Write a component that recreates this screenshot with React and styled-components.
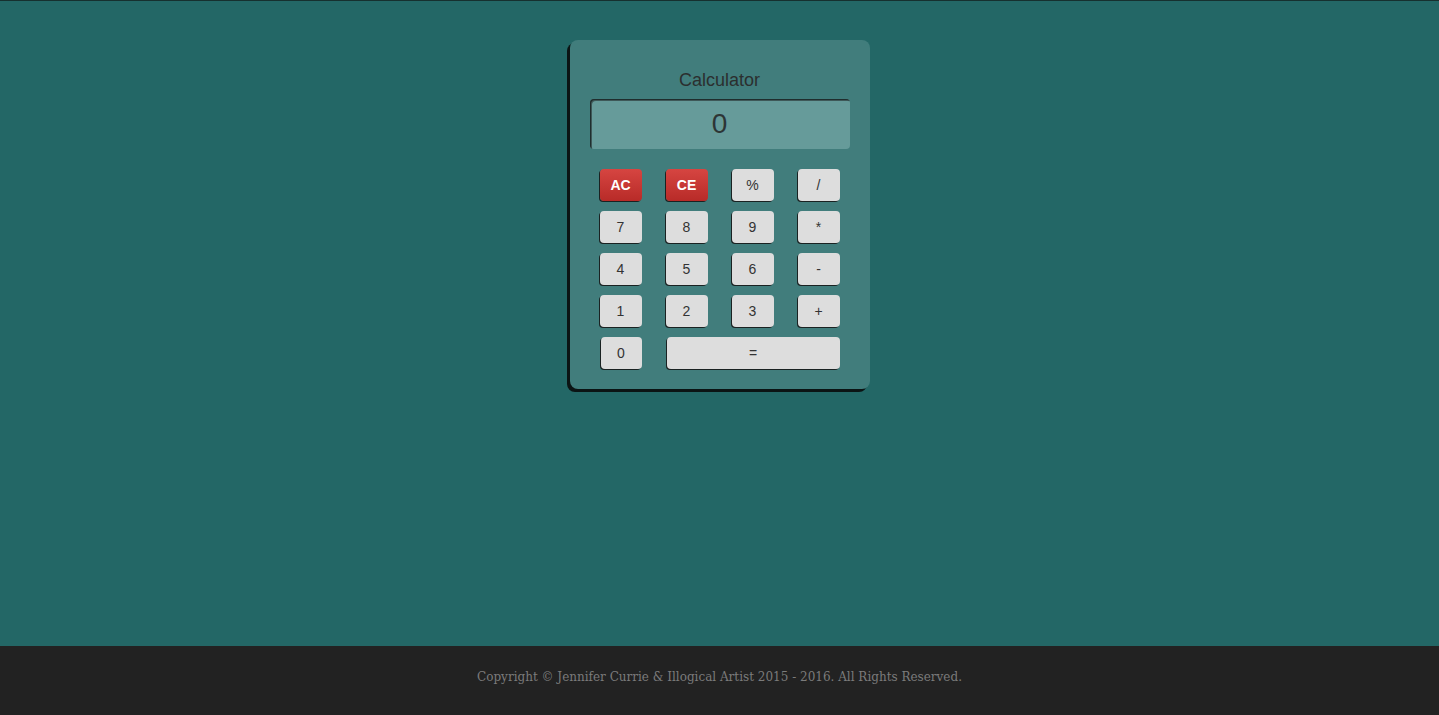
import React from "react";
import styled, { createGlobalStyle } from "styled-components";

const GlobalStyle = createGlobalStyle`
  html, body {
    margin: 0;
    padding: 0;
    height: 100%;
  }
  #root {
    min-height: 100%;
  }
`;

const Page = styled.div`
  display: flex;
  flex-direction: column;
  min-height: 100vh;
  background-color: #236766;
  border-top: 1px solid #16302f;
  box-sizing: border-box;
`;

const Main = styled.main`
  flex: 1;
  display: flex;
  justify-content: center;
  align-items: flex-start;
  padding-top: 39px;
`;

const Card = styled.div`
  width: 300px;
  box-sizing: border-box;
  padding: 20px;
  background-color: #417d7c;
  border-radius: 8px;
  box-shadow: -3px 3px 0 #0b1414;
`;

const Title = styled.h1`
  margin: 10px 0 9px;
  font-family: "Liberation Sans", Arial, sans-serif;
  font-size: 18px;
  line-height: 20px;
  font-weight: normal;
  text-align: center;
  color: #2b2f2f;
`;

const Display = styled.div`
  height: 50px;
  box-sizing: border-box;
  background-color: #669b9a;
  border-radius: 4px;
  box-shadow: inset 1px 1px 0 #1f2d2d, inset 2px 2px 0 #3e5858;
  display: flex;
  align-items: center;
  justify-content: center;
  font-family: "Liberation Sans", Arial, sans-serif;
  font-size: 28px;
  color: #2d3535;
`;

const Keys = styled.div`
  display: grid;
  grid-template-columns: repeat(4, 42px);
  grid-auto-rows: 32px;
  column-gap: 24px;
  row-gap: 10px;
  margin-top: 20px;
  padding-left: 10px;
`;

const Key = styled.button`
  grid-column: ${(props) => (props.$span ? `span ${props.$span}` : "auto")};
  margin-left: ${(props) => (props.$nudge ? "1px" : "0")};
  border: none;
  border-radius: 4px;
  padding: 0;
  font-family: "Liberation Sans", Arial, sans-serif;
  font-size: 14px;
  font-weight: ${(props) => (props.$danger ? "bold" : "normal")};
  color: ${(props) => (props.$danger ? "#ffffff" : "#333333")};
  background: ${(props) =>
    props.$danger
      ? "linear-gradient(to bottom, #d64541, #b82b28)"
      : "#dddddd"};
  box-shadow: -1px 1px 0 #1a2222;
  cursor: pointer;
`;

const Footer = styled.footer`
  height: 69px;
  box-sizing: border-box;
  padding-bottom: 8px;
  background-color: #222222;
  display: flex;
  align-items: center;
  justify-content: center;
  font-family: "DejaVu Serif", Georgia, serif;
  font-size: 12px;
  color: #7b7b7b;
`;

const keys = [
  { label: "AC", danger: true },
  { label: "CE", danger: true },
  { label: "%" },
  { label: "/" },
  { label: "7" },
  { label: "8" },
  { label: "9" },
  { label: "*" },
  { label: "4" },
  { label: "5" },
  { label: "6" },
  { label: "-" },
  { label: "1" },
  { label: "2" },
  { label: "3" },
  { label: "+" },
  { label: "0", nudge: true },
  { label: "=", span: 3, nudge: true },
];

const App = () => {
  return (
    <>
      <GlobalStyle />
      <Page>
        <Main>
          <Card>
            <Title>Calculator</Title>
            <Display>0</Display>
            <Keys>
              {keys.map((k) => (
                <Key
                  key={k.label}
                  $danger={k.danger}
                  $span={k.span}
                  $nudge={k.nudge}
                >
                  {k.label}
                </Key>
              ))}
            </Keys>
          </Card>
        </Main>
        <Footer>
          Copyright © Jennifer Currie &amp; Illogical Artist 2015 - 2016. All
          Rights Reserved.
        </Footer>
      </Page>
    </>
  );
};

export default App;
